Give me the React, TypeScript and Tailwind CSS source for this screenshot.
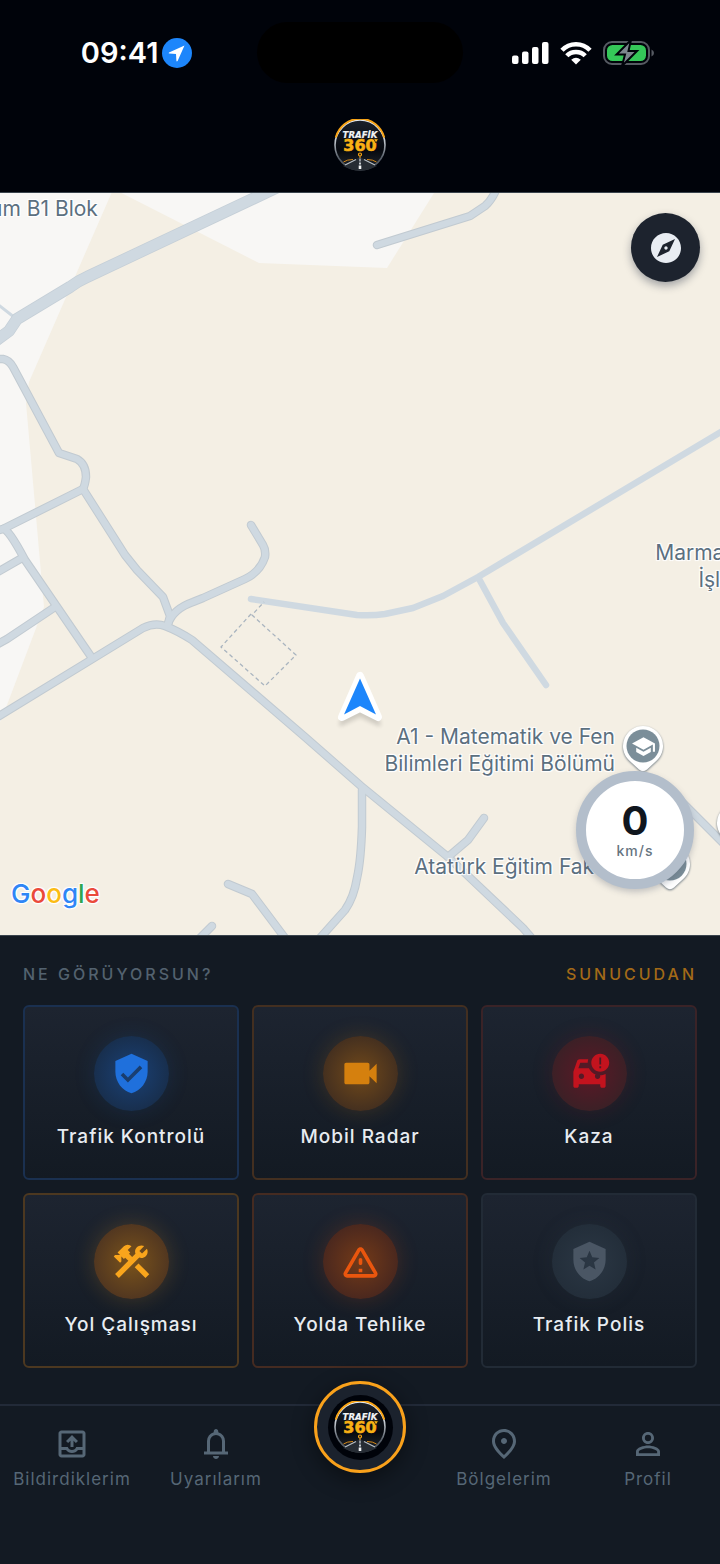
import type { ReactNode } from "react";
import {
  MdCarCrash,
  MdConstruction,
  MdExplore,
  MdLocalPolice,
  MdOutlineFmdGood,
  MdOutlineOutbox,
  MdPersonOutline,
  MdSchool,
  MdVerifiedUser,
  MdVideocam,
} from "react-icons/md";

const labelHalo =
  "[text-shadow:0_0_2px_#fff,1px_1px_1px_#fff,-1px_-1px_1px_#fff,1px_-1px_1px_#fff,-1px_1px_1px_#fff]";

function Logo({ className }: { className?: string }) {
  return (
    <svg viewBox="0 0 52 52" className={className} role="img" aria-label="Trafik 360">
      <defs>
        <linearGradient id="sky" x1="0" y1="0" x2="0" y2="1">
          <stop offset="0" stopColor="#1b212b" />
          <stop offset="0.6" stopColor="#06090f" />
          <stop offset="1" stopColor="#232930" />
        </linearGradient>
        <linearGradient id="rim" x1="0" y1="0" x2="0" y2="1">
          <stop offset="0.3" stopColor="#e3e8ee" />
          <stop offset="0.75" stopColor="#59616b" />
          <stop offset="1" stopColor="#4a515a" />
        </linearGradient>
      </defs>
      <circle cx="26" cy="26" r="25" fill="url(#sky)" stroke="url(#rim)" strokeWidth="1.6" />
      <path d="M1.8 18.5A25 25 0 0 1 50.2 18.5" fill="none" stroke="#f9a414" strokeWidth="2" />
      <path d="M26 38L9 47Q26 56 43 47Z" fill="#262c34" />
      <path d="M22 40.5L11 46M30 40.5L41 46" stroke="#b9c0c7" strokeWidth="1.2" />
      <path d="M19 40.5Q13 40.5 9.5 43M33 40.5Q39 40.5 42.5 43" stroke="#d98a18" strokeWidth="1" fill="none" />
      <path d="M26 39.5v3" stroke="#d6dbe0" strokeWidth="1.2" />
      <path d="M26 43.5v2" stroke="#d6dbe0" strokeWidth="1.8" />
      <path d="M26 46.5v3.5" stroke="#f2f4f6" strokeWidth="2.6" />
      <circle cx="26" cy="35.5" r="1.5" fill="none" stroke="#f9a414" strokeWidth="1.2" />
      <path d="M26 37v2" stroke="#f9a414" strokeWidth="1" />
      <text x="26" y="18.8" textAnchor="middle" fill="#f1f3f6" stroke="#f1f3f6" strokeWidth="0.2" fontFamily="DejaVu Sans, sans-serif" fontSize="8.6" fontWeight="700" fontStyle="italic">
        TRAFİK
      </text>
      <text x="26" y="31.8" textAnchor="middle" fill="#f9b014" stroke="#f9b014" strokeWidth="0.6" fontFamily="DejaVu Sans, sans-serif" fontSize="16" fontWeight="700">
        360
      </text>
      <path d="M39.500 19.500l5 .5-2.500 4z" fill="#f9b014" stroke="#06090f" strokeWidth="0.7" />
    </svg>
  );
}

function StatusBar() {
  return (
    <div className="grid grid-cols-3 items-center px-4 pt-[22px]">
      <div className="flex items-center justify-center gap-1 pl-3 text-[29px] font-semibold leading-8 text-white">
        <span>09:41</span>
        <svg viewBox="0 0 30 30" className="size-[30px]" aria-hidden="true">
          <circle cx="15" cy="15" r="15" fill="#1d86fb" />
          <path d="M22.5 7.5L7 14.5q-1 .8 .4 1.1l6.6 .4 .4 6.7q.3 1.4 1.2 .4z" fill="#fff" />
        </svg>
      </div>
      <div className="mx-auto h-[61px] w-[206px] rounded-full bg-black" />
      <div className="flex items-center justify-center gap-[11px] pr-3">
        <svg viewBox="0 0 37 24" className="h-6 w-[37px]" fill="#fff" aria-hidden="true">
          <rect x="0" y="14.5" width="6.5" height="8.5" rx="2" />
          <rect x="10" y="10.5" width="6.5" height="12.5" rx="2" />
          <rect x="20" y="6" width="6.5" height="17" rx="2" />
          <rect x="30" y="1" width="6.5" height="22" rx="2" />
        </svg>
        <svg viewBox="0 0 32 24" className="h-6 w-8" fill="none" stroke="#fff" strokeWidth="4.5" aria-hidden="true">
          <path d="M2 9.3Q7.700 3.200 16 3.200T30 9.300" />
          <path d="M6.8 14.800Q10.500 11 16 11T25.200 14.800" />
          <path d="M16 23.5L11.200 18.700Q16 14.600 20.800 18.700Z" fill="#fff" stroke="none" />
        </svg>
        <svg viewBox="0 0 52 26" className="h-[26px] w-[52px]" aria-hidden="true">
          <rect x="1" y="2" width="45" height="22" rx="8" fill="none" stroke="#565b63" strokeWidth="2" />
          <rect x="4" y="5" width="39" height="16" rx="5.5" fill="#35c759" />
          <path d="M48.500 9.500q2.500 1 2.500 3.500t-2.500 3.500z" fill="#565b63" />
          <path d="M28 0L13.500 14.500H22L19 26L34 11H25.500Z" fill="#7c868e" stroke="#00030a" strokeWidth="2" />
        </svg>
      </div>
    </div>
  );
}

const roads = [
  "M83 489L3 529L-4 531",
  "M22 558L-4 573",
  "M55 607L7 639L-4 645",
  "M3 529Q8 528 25 560L92 658",
  "M-4 718L143 628Q155 622 165 626Q178 631 192 640L305 737L361 786L448 857L523 928L535 942",
  "M-4 359H3Q9 360 13 367L59 453L77 459Q86 464 86 477Q85 485 83 489L125 555L137 570L163 597L170 616L168 624",
  "M168 624Q173 609 193 602L203 598L245 579Q260 572 265 557Q266 550 263 545L251 525",
  "M362 790L362 827Q361 860 357 878Q354 897 345 910L320 938",
  "M228 884L252 894L285 938",
  "M212 926L200 938",
  "M484 818L468 840L448 857",
  "M677 797L726 846",
  "M497 188Q492 200 485 206L470 216L377 245",
];

const avenue = "M-6 342L9 331L17 319L70 287Q78 281 87 277L280 186";

function SchoolPin({ className, icon }: { className: string; icon?: ReactNode }) {
  return (
    <div className={`absolute flex h-[48px] w-[42px] justify-center pt-[9px] ${className}`}>
      <svg viewBox="0 0 42 48" className="absolute inset-0 drop-shadow-[0_1px_1px_#6b7780]" aria-hidden="true">
        <path d="M21 1A20 20 0 0 0 7 35.3L17 44.5Q21 48 25 44.5L35 35.3A20 20 0 0 0 21 1Z" fill="#fff" />
        <circle cx="21" cy="21" r="16.5" fill="#7b8e99" />
      </svg>
      {icon}
    </div>
  );
}

function MapView() {
  return (
    <main className="relative aspect-[360/371] w-full overflow-hidden bg-[#f4efe4]">
      <svg viewBox="0 193 720 742" preserveAspectRatio="xMidYMid slice" className="absolute inset-0 size-full" fill="none" strokeLinecap="round" strokeLinejoin="round" aria-hidden="true">
        <path d="M0 193H111.5L29 382L26 403L44 607L7 705L0 722Z" fill="#f8f7f5" />
        <path d="M121.5 193L259 263L387 268L434 193Z" fill="#f8f7f5" />
        <path d="M-4 303L14 317" stroke="#cfd9e1" strokeWidth="3" />
        <path d={avenue} stroke="#c5cfd7" strokeWidth="12" />
        <path d={avenue} stroke="#cfd9e1" strokeWidth="10.5" />
        {roads.map((d) => (
          <path key={d} d={d} stroke="#c1cad1" strokeWidth="8.5" />
        ))}
        {roads.map((d) => (
          <path key={d} d={d} stroke="#cfd9e1" strokeWidth="6.5" />
        ))}
        <path d="M251 599L357 615Q372 616 385 614L413 608L443 596L478 577L726 429M478 577L503 623L546 685" stroke="#cfd9e1" strokeWidth="6.5" />
        <path d="M251 614L221 647L265 686L296 655L252 615L264 602" stroke="#a9b4bf" strokeWidth="1.3" strokeDasharray="4 3" strokeLinecap="butt" />
        <path d="M360 684L341 724L360 715L379 724Z" fill="#000" opacity="0.15" stroke="#000" strokeWidth="4" className="blur-[2px]" />
        <path d="M360 676L342 717L360 708L378 717Z" fill="#fff" stroke="#fff" strokeWidth="8" />
        <path d="M360 678.5L344 714.5L360 706L376 714.5Z" fill="#1d86fb" />
      </svg>

      <div className={`text-[21px] leading-[27px] text-[#5c7080] ${labelHalo}`}>
        <p className="absolute -left-[10px] top-[2px] whitespace-nowrap">um B1 Blok</p>
        <p className="absolute left-[91%] top-[346px] whitespace-nowrap">Marmara</p>
        <p className="absolute left-[97%] top-[373px] whitespace-nowrap">İşletme</p>
        <p className="absolute right-[105px] top-[530px] whitespace-nowrap text-right">
          A1 - Matematik ve Fen
          <br />
          Bilimleri Eğitimi Bölümü
        </p>
        <p className="absolute right-[73px] top-[660px] whitespace-nowrap text-right">Atatürk Eğitim Fakültesi</p>
      </div>
      <SchoolPin className="right-[56px] top-[532px]" icon={<MdSchool className="relative size-[25px] text-white" />} />
      <SchoolPin className="right-[29px] top-[650px]" />
      <SchoolPin className="-right-[38px] top-[609px]" />

      <button type="button" aria-label="Pusula" className="absolute right-5 top-5 flex size-[69px] items-center justify-center rounded-full bg-[#1d232e] text-[#e9edf3] shadow-[0_4px_8px_rgba(40,50,70,0.4)]">
        <MdExplore className="size-9" />
      </button>

      <div className="absolute bottom-[46px] right-[26px] flex size-[118px] flex-col items-center justify-center gap-[2px] rounded-full border-[10px] border-[#b3becb] bg-white shadow-[0_3px_6px_rgba(80,90,110,0.3)]">
        <span className="text-[40px] font-bold leading-10 text-[#10161e]">0</span>
        <span className="text-[14px] font-medium leading-4 tracking-[1px] text-[#66747f]">km/s</span>
      </div>

      <p className={`absolute bottom-[25px] left-[11px] text-[26px] font-medium leading-8 ${labelHalo}`}>
        <span className="text-[#2f86f6]">G</span>
        <span className="text-[#ea4a3b]">o</span>
        <span className="text-[#fbbc14]">o</span>
        <span className="text-[#2f86f6]">g</span>
        <span className="text-[#2fa64f]">l</span>
        <span className="text-[#ea4a3b]">e</span>
      </p>
    </main>
  );
}

function WarningIcon({ className }: { className?: string }) {
  return (
    <svg viewBox="0 0 24 24" fill="currentColor" className={className} aria-hidden="true">
      <path d="M12 5.990L19.530 19H4.470L12 5.990M2.740 18c-.77 1.330.19 3 1.730 3h15.060c1.540 0 2.500-1.670 1.730-3L13.730 4.990c-.77-1.330-2.690-1.330-3.460 0L2.740 18zM11 11v2c0 .55.45 1 1 1s1-.45 1-1v-2c0-.55-.45-1-1-1s-1 .45-1 1zm0 5h2v2h-2z" />
    </svg>
  );
}

function BellIcon({ className }: { className?: string }) {
  return (
    <svg viewBox="0 0 24 24" fill="currentColor" className={className} aria-hidden="true">
      <path d="M4 19v-2h2v-7q0-2.075 1.250-3.687T10.500 4.200v-.7q0-.625.438-1.062T12 2t1.063.438T13.500 3.500v.7q2 .5 3.250 2.113T18 10v7h2v2zm8 3q-.825 0-1.412-.587T10 20h4q0 .825-.587 1.413T12 22m-4-5h8v-7q0-1.650-1.175-2.825T12 6T9.175 7.175T8 10z" />
    </svg>
  );
}

const reports = [
  {
    label: "Trafik Kontrolü",
    icon: <MdVerifiedUser className="size-[43px]" />,
    card: "border-[#1a3050]",
    disc: "text-[#1f70dc] bg-[radial-gradient(circle,#1a4176,#182f4e_70%)] shadow-[0_0_22px_rgba(30,111,219,0.14)]",
  },
  {
    label: "Mobil Radar",
    icon: <MdVideocam className="size-[43px]" />,
    card: "border-[#432f20]",
    disc: "text-[#d5800e] bg-[radial-gradient(circle,#71491a,#45301f_70%)] shadow-[0_0_22px_rgba(213,128,14,0.2)]",
  },
  {
    label: "Kaza",
    icon: <MdCarCrash className="size-[43px]" />,
    card: "border-[#3a2327]",
    disc: "text-[#c3131e] bg-[radial-gradient(circle,#5c1826,#3c2026_70%)] shadow-[0_0_22px_rgba(195,19,30,0.16)]",
  },
  {
    label: "Yol Çalışması",
    icon: <MdConstruction className="size-[43px]" />,
    card: "border-[#4c3820]",
    disc: "text-[#f9a51c] bg-[radial-gradient(circle,#7a531b,#523720_70%)] shadow-[0_0_22px_rgba(249,165,28,0.2)]",
  },
  {
    label: "Yolda Tehlike",
    icon: <WarningIcon className="size-[43px]" />,
    card: "border-[#452b21]",
    disc: "text-[#ea560e] bg-[radial-gradient(circle,#733a18,#4b281e_70%)] shadow-[0_0_22px_rgba(234,86,14,0.2)]",
  },
  {
    label: "Trafik Polis",
    icon: <MdLocalPolice className="size-[43px]" />,
    card: "border-[#222b36]",
    disc: "text-[#4a5664] bg-[radial-gradient(circle,#2b3744,#232e3a_70%)] shadow-[0_0_22px_rgba(74,86,100,0.14)]",
  },
];

function ReportPanel() {
  return (
    <section className="border-t border-[#3a444d] px-[23px] pb-9 pt-[26px]">
      <div className="mb-[19px] flex items-center justify-between text-base font-medium leading-6 tracking-[3px]">
        <h2 className="text-[#53626f]">NE GÖRÜYORSUN?</h2>
        <span className="text-[#a36a17]">SUNUCUDAN</span>
      </div>
      <div className="grid grid-cols-3 gap-[13px]">
        {reports.map((r) => (
          <button key={r.label} type="button" className={`flex flex-col items-center gap-[14px] rounded-md border-2 bg-linear-to-b from-[#1d2430] to-[#131a23] px-2 py-[29px] ${r.card}`}>
            <span className={`flex size-[75px] items-center justify-center rounded-full ${r.disc}`}>{r.icon}</span>
            <span className="whitespace-nowrap text-[19px] font-medium leading-6 tracking-[1px] text-[#e8ecf1]">{r.label}</span>
          </button>
        ))}
      </div>
    </section>
  );
}

function NavItem({ icon, label }: { icon: ReactNode; label: string }) {
  return (
    <a href="#" className="flex flex-col items-center gap-[5px]">
      {icon}
      <span className="whitespace-nowrap text-[17px] leading-6 tracking-[1px]">{label}</span>
    </a>
  );
}

function BottomNav() {
  return (
    <nav className="relative grid grid-cols-5 border-t-2 border-[#222a38] pb-[73px] pt-[20px] text-[#566776]">
      <NavItem icon={<MdOutlineOutbox className="size-9" />} label="Bildirdiklerim" />
      <NavItem icon={<BellIcon className="size-9" />} label="Uyarılarım" />
      <button type="button" aria-label="Trafik 360" className="absolute -top-[25px] left-1/2 flex size-[92px] -translate-x-1/2 items-center justify-center rounded-full border-[3px] border-[#f9a11b] bg-[#1b222d] shadow-[0_6px_22px_rgba(0,0,0,0.45)]">
        <span className="flex size-[65px] items-center justify-center rounded-full bg-[#00030a]">
          <Logo className="size-[52px]" />
        </span>
      </button>
      <span />
      <NavItem icon={<MdOutlineFmdGood className="size-9" />} label="Bölgelerim" />
      <NavItem icon={<MdPersonOutline className="size-9" />} label="Profil" />
    </nav>
  );
}

export default function App() {
  return (
    <div className="min-h-screen bg-[#131a23] font-['Inter',sans-serif]">
      <header className="border-b border-[#3a444d] bg-[#00030a] pb-[21px]">
        <StatusBar />
        <Logo className="mx-auto mt-9 size-[52px]" />
      </header>
      <MapView />
      <ReportPanel />
      <BottomNav />
    </div>
  );
}
